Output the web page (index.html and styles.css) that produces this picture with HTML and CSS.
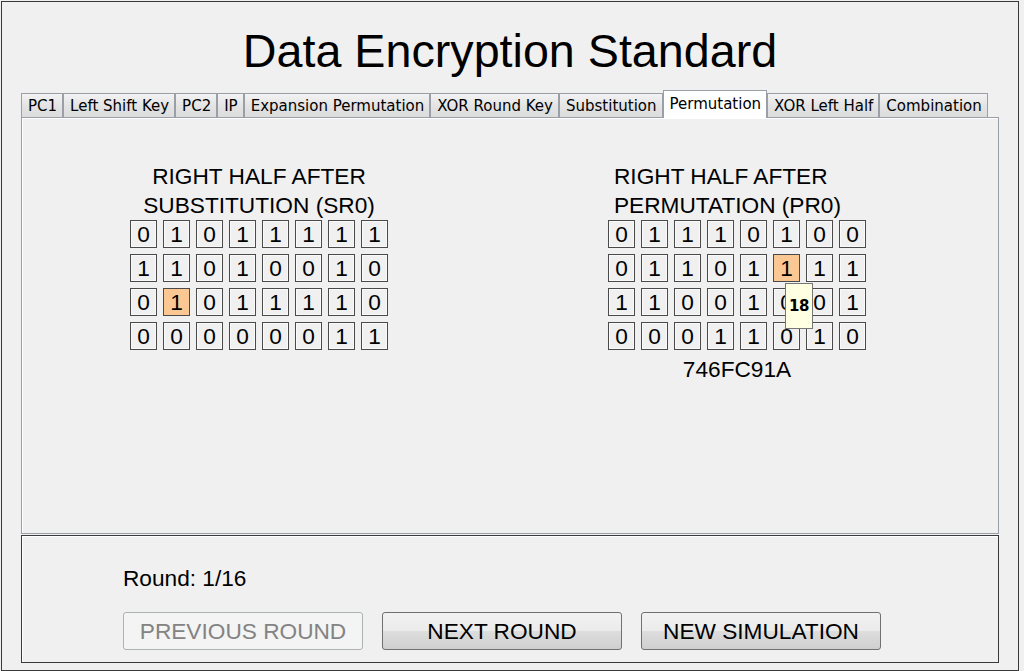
FILE: index.html
```html
<!DOCTYPE html>
<html lang="en">
<head>
    <meta charset="UTF-8">
    <meta name="viewport" content="width=device-width, initial-scale=1.0">
    <title>Data Encryption Standard</title>
    <link rel="stylesheet" href="styles.css">
</head>
<body>
    <div class="window">
        <h1 class="title">Data Encryption Standard</h1>

        <div class="tabs">
            <div class="tab">PC1</div>
            <div class="tab">Left Shift Key</div>
            <div class="tab">PC2</div>
            <div class="tab">IP</div>
            <div class="tab">Expansion Permutation</div>
            <div class="tab">XOR Round Key</div>
            <div class="tab">Substitution</div>
            <div class="tab active">Permutation</div>
            <div class="tab">XOR Left Half</div>
            <div class="tab">Combination</div>
        </div>

        <div class="tab-panel">
            <div class="block block-left">
                <p class="block-title">RIGHT HALF AFTER<br>SUBSTITUTION (SR0)</p>
                <div class="bits">
                    <span>0</span><span>1</span><span>0</span><span>1</span><span>1</span><span>1</span><span>1</span><span>1</span>
                    <span>1</span><span>1</span><span>0</span><span>1</span><span>0</span><span>0</span><span>1</span><span>0</span>
                    <span>0</span><span class="hl">1</span><span>0</span><span>1</span><span>1</span><span>1</span><span>1</span><span>0</span>
                    <span>0</span><span>0</span><span>0</span><span>0</span><span>0</span><span>0</span><span>1</span><span>1</span>
                </div>
            </div>

            <div class="block block-right">
                <p class="block-title">RIGHT HALF AFTER<br>PERMUTATION (PR0)</p>
                <div class="bits">
                    <span>0</span><span>1</span><span>1</span><span>1</span><span>0</span><span>1</span><span>0</span><span>0</span>
                    <span>0</span><span>1</span><span>1</span><span>0</span><span>1</span><span class="hl">1</span><span>1</span><span>1</span>
                    <span>1</span><span>1</span><span>0</span><span>0</span><span>1</span><span>0</span><span>0</span><span>1</span>
                    <span>0</span><span>0</span><span>0</span><span>1</span><span>1</span><span>0</span><span>1</span><span>0</span>
                    <div class="tooltip">18</div>
                </div>
                <p class="hex">746FC91A</p>
            </div>
        </div>

        <div class="controls">
            <p class="round">Round: 1/16</p>
            <div class="buttons">
                <button disabled>PREVIOUS ROUND</button>
                <button>NEXT ROUND</button>
                <button>NEW SIMULATION</button>
            </div>
        </div>
    </div>
</body>
</html>
```

FILE: styles.css
```css
body {
    margin: 0;
    padding: 1px 0 0 1px;
    background-color: #f0f0f0;
    font-family: "Liberation Sans", Arial, sans-serif;
    color: #000;
}
.window {
    width: 1018px;
    height: 670px;
    box-sizing: border-box;
    border: 1px solid #3a3a3a;
    padding: 23px 19px 0 19px;
    background-color: #f0f0f0;
}
.title {
    margin: 0;
    height: 52px;
    font-size: 35pt;
    font-weight: normal;
    line-height: 52px;
    text-align: center;
}
.tabs {
    display: flex;
    align-items: flex-end;
    height: 27px;
    margin-top: 13px;
}
.tab {
    box-sizing: border-box;
    height: 24px;
    padding: 2px 5px 0 6px;
    border: 1px solid #9a9ea6;
    border-bottom: none;
    background: linear-gradient(#f3f3f3, #e4e4e4 50%, #dcdcdc);
    font-family: "DejaVu Sans", Tahoma, sans-serif;
    font-size: 15px;
    line-height: 21px;
    white-space: nowrap;
}
.tab.active {
    position: relative;
    z-index: 1;
    height: 28px;
    margin-bottom: -1px;
    padding-top: 3px;
    background: #fff;
}
.tab-panel {
    display: flex;
    box-sizing: border-box;
    width: 978px;
    height: 417px;
    border: 1px solid #9a9ea6;
    box-shadow: inset 1px 1px 0 #fff;
    padding: 44px 0 0 108px;
}
.block {
    width: 258px;
}
.block-right {
    margin-left: 220px;
}
.block-title {
    margin: 0;
    font-size: 17pt;
    line-height: 29px;
    white-space: nowrap;
}
.block-left .block-title {
    text-align: center;
}
.block-right .block-title {
    padding-left: 6px;
}
.bits {
    position: relative;
    display: grid;
    grid-template-columns: repeat(8, 27px);
    grid-auto-rows: 28px;
    gap: 6px;
}
.bits span {
    display: flex;
    align-items: center;
    justify-content: center;
    box-sizing: border-box;
    border: 1px solid #4a4a4a;
    box-shadow: inset 0 0 0 1px #fafafa;
    font-size: 17pt;
}
.bits span.hl {
    background-color: #fbc893;
    box-shadow: none;
}
.tooltip {
    position: absolute;
    left: 177px;
    top: 63px;
    width: 28px;
    height: 46px;
    box-sizing: border-box;
    border: 1px solid #767676;
    background-color: #ffffe1;
    display: flex;
    align-items: center;
    justify-content: center;
    font-family: "DejaVu Sans", Tahoma, sans-serif;
    font-size: 15px;
    font-weight: bold;
    letter-spacing: -0.5px;
}
.hex {
    margin: 5px 0 0 0;
    font-size: 17pt;
    line-height: 29px;
    text-align: center;
}
.controls {
    box-sizing: border-box;
    width: 978px;
    height: 128px;
    margin-top: 1px;
    border: 1px solid #3a3a3a;
    box-shadow: inset 1px 1px 0 #fff;
    padding: 28px 0 0 101px;
}
.round {
    margin: 0;
    font-size: 17pt;
    line-height: 28px;
}
.buttons {
    display: flex;
    gap: 19px;
    margin-top: 20px;
}
button {
    width: 240px;
    height: 38px;
    border: 1px solid #707070;
    border-radius: 3px;
    background: linear-gradient(#f2f2f2, #ebebeb 50%, #dddddd 51%, #cfcfcf);
    font-family: "Liberation Sans", Arial, sans-serif;
    font-size: 17pt;
    color: #000;
    padding: 0;
}
button:disabled {
    border-color: #adb2b5;
    background: #f4f4f4;
    color: #838383;
}
```
